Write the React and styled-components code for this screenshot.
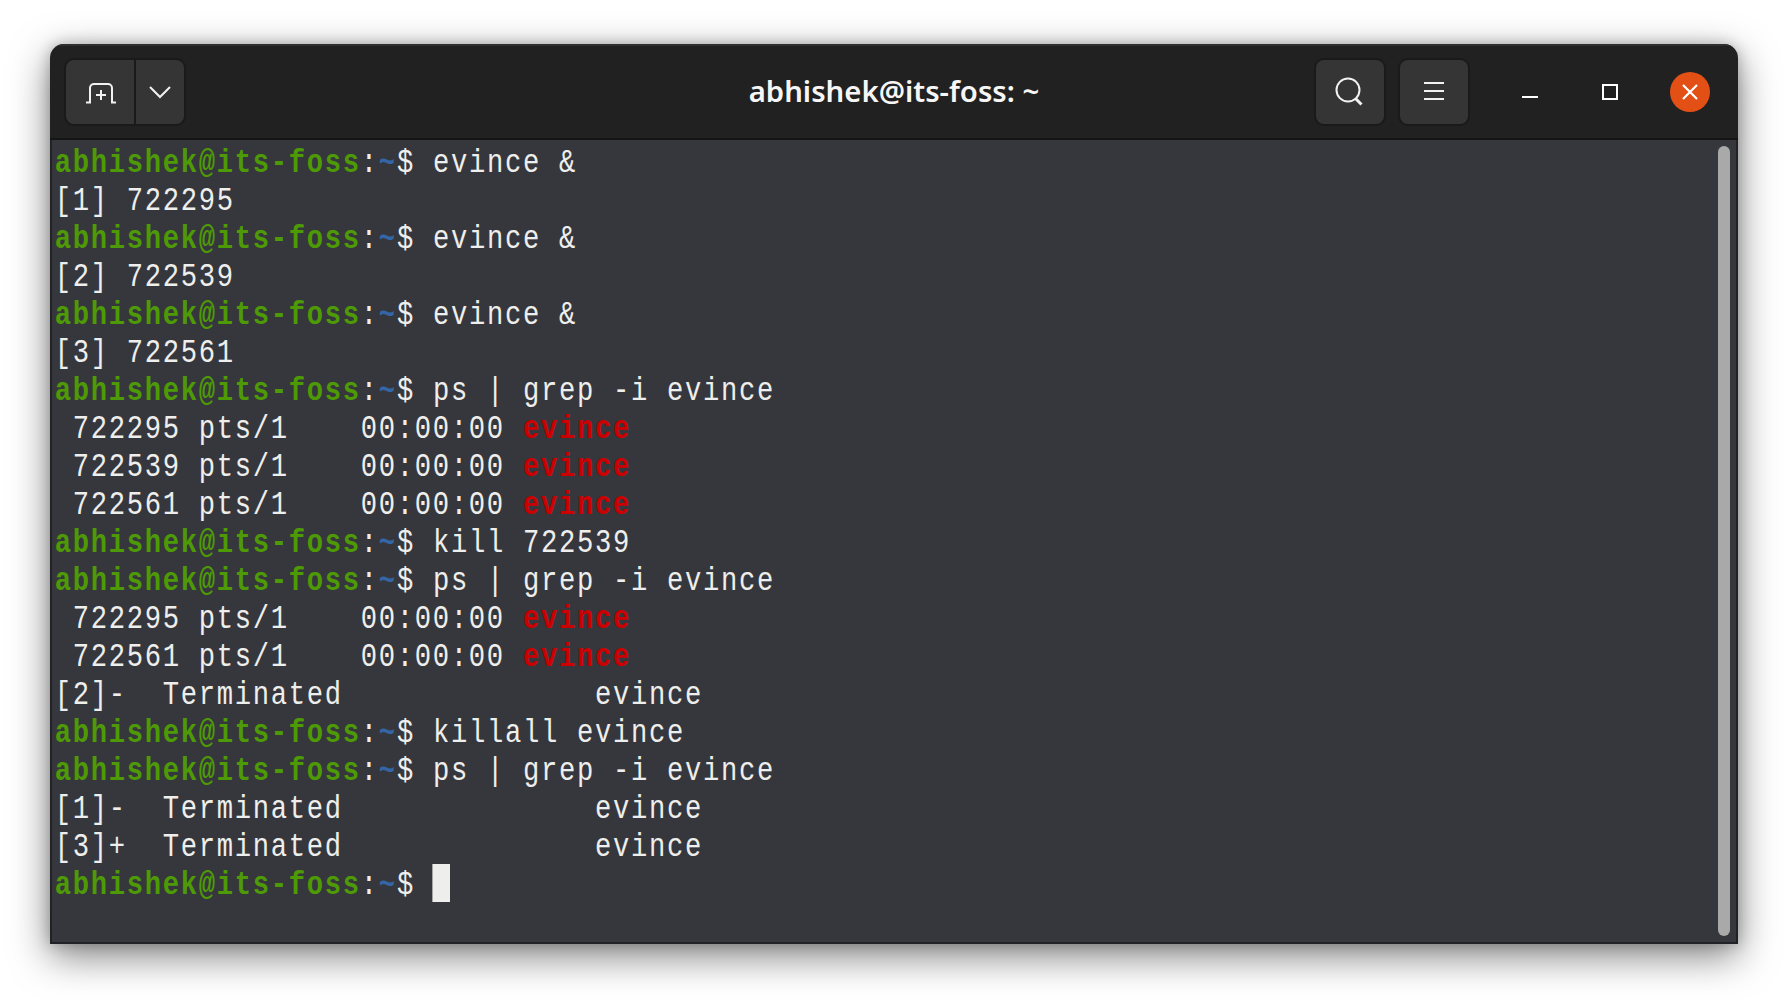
import React from "react";
import styled, { createGlobalStyle } from "styled-components";

const GlobalStyle = createGlobalStyle`
  html, body {
    margin: 0;
    padding: 0;
    background: #ffffff;
  }
`;

const Page = styled.div`
  box-sizing: border-box;
  width: 1788px;
  height: 1000px;
  padding: 44px 50px 56px;
  overflow: hidden;
  background: #ffffff;
`;

const Window = styled.div`
  display: flex;
  flex-direction: column;
  height: 900px;
  border-radius: 14px 14px 0 0;
  box-shadow: 0 12px 38px rgba(0, 0, 0, 0.5), 0 0 14px rgba(0, 0, 0, 0.22);
  overflow: hidden;
`;

const Header = styled.header`
  box-sizing: border-box;
  display: grid;
  grid-template-columns: 1fr auto 1fr;
  align-items: center;
  height: 96px;
  padding: 0 8px;
  background: #212121;
  border-top: 2px solid #2f2f2f;
  border-bottom: 2px solid #151515;
`;

const Left = styled.div`
  display: flex;
  padding-left: 8px;
`;

const Right = styled.div`
  display: flex;
  justify-content: flex-end;
  align-items: center;
  gap: 16px;
`;

const Title = styled.h1`
  margin: 0 0 2px;
  color: #f6f6f6;
  font-family: "Noto Sans", sans-serif;
  font-size: 29.3px;
  font-weight: 600;
`;

const SplitButton = styled.div`
  display: flex;
  height: 64px;
  border-radius: 8px;
  background: #353535;
  box-shadow: 0 0 0 2px #1a1a1a;
  overflow: hidden;
`;

const SplitPart = styled.div`
  display: flex;
  align-items: center;
  justify-content: center;
  width: ${(p) => p.$width}px;
  border-left: ${(p) => (p.$divided ? "2px solid #1a1a1a" : "none")};
`;

const IconButton = styled.div`
  display: flex;
  align-items: center;
  justify-content: center;
  width: 68px;
  height: 64px;
  border-radius: 8px;
  background: #353535;
  box-shadow: 0 0 0 2px #1a1a1a;
`;

const Controls = styled.div`
  display: flex;
  margin-left: 6px;
`;

const Control = styled.div`
  display: flex;
  align-items: center;
  justify-content: center;
  width: 80px;
  height: 64px;
`;

const CloseCircle = styled.div`
  display: flex;
  align-items: center;
  justify-content: center;
  width: 40px;
  height: 40px;
  border-radius: 50%;
  background: #e25016;
`;

const Body = styled.main`
  position: relative;
  flex: 1;
  padding: 2px 0 0 2px;
  background: #36373d;
  border: solid #222226;
  border-width: 0 2px 2px;
`;

const Scrollbar = styled.div`
  position: absolute;
  top: 6px;
  right: 6px;
  bottom: 6px;
  width: 12px;
  border-radius: 6px;
  background: #a9a9a9;
`;

// no Ubuntu Mono here: narrow Liberation Mono down to an 18px cell
const Output = styled.pre`
  margin: 0;
  color: #eeeeec;
  font-family: "Liberation Mono", monospace;
  font-size: 34px;
  letter-spacing: 2.1px;
  line-height: 38px;
  transform: scaleX(0.8);
  transform-origin: left top;
`;

const Line = styled.div`
  box-sizing: border-box;
  height: 38px;
  padding: 2px 0 0 1px;
  white-space: pre;
`;

const User = styled.span`
  color: #4e9a06;
  font-weight: bold;
`;

const Path = styled.span`
  color: #3465a4;
  font-weight: bold;
`;

const Match = styled.span`
  color: #cc0000;
  font-weight: bold;
`;

const Cursor = styled.span`
  display: inline-block;
  vertical-align: top;
  width: 22.5px;
  height: 38px;
  margin: -2px 0 0 -1px;
  background: #eeeeec;
`;

const Prompt = () => (
  <>
    <User>abhishek@its-foss</User>:<Path>~</Path>$
  </>
);

const Command = ({ children }) => (
  <Line>
    <Prompt /> {children}
  </Line>
);

const Proc = ({ pid }) => (
  <Line>
    {` ${pid} pts/1    00:00:00 `}
    <Match>evince</Match>
  </Line>
);

function NewTabIcon() {
  return (
    <svg width="32" height="24" viewBox="-1 0 32 24" fill="none" stroke="#f2f2f2" strokeWidth="2">
      <path d="M1 22.5h4V8a4 4 0 0 1 4-4h14a4 4 0 0 1 4 4v14.5h4" />
      <path d="M11 15h10M16 10v10" />
    </svg>
  );
}

function ChevronIcon() {
  return (
    <svg width="22" height="14" viewBox="0 0 22 14" fill="none" stroke="#f2f2f2" strokeWidth="2">
      <path d="M1 2l10 10L21 2" />
    </svg>
  );
}

function SearchIcon() {
  return (
    <svg width="30" height="30" viewBox="0 0 30 30" fill="none" stroke="#f2f2f2" strokeWidth="2">
      <circle cx="13" cy="13" r="11.5" />
      <path d="M20.5 21.5l6 6" strokeWidth="3" />
    </svg>
  );
}

function MenuIcon() {
  return (
    <svg width="20" height="20" viewBox="0 0 20 20" fill="none" stroke="#f2f2f2" strokeWidth="2">
      <path d="M0 1h20M0 9h20M0 17h20" />
    </svg>
  );
}

function MinimizeIcon() {
  return (
    <svg width="16" height="16" viewBox="0 0 16 16" fill="none" stroke="#ffffff" strokeWidth="2">
      <path d="M0 13h16" />
    </svg>
  );
}

function MaximizeIcon() {
  return (
    <svg width="16" height="16" viewBox="0 0 16 16" fill="none" stroke="#ffffff" strokeWidth="2">
      <rect x="1" y="1" width="14" height="14" />
    </svg>
  );
}

function CloseIcon() {
  return (
    <svg width="16" height="16" viewBox="0 0 16 16" fill="none" stroke="#ffffff" strokeWidth="2.2">
      <path d="M1 1l14 14M15 1L1 15" />
    </svg>
  );
}

export default function App() {
  return (
    <Page>
      <GlobalStyle />
      <Window>
        <Header>
          <Left>
            <SplitButton>
              <SplitPart $width={68}>
                <NewTabIcon />
              </SplitPart>
              <SplitPart $width={48} $divided>
                <ChevronIcon />
              </SplitPart>
            </SplitButton>
          </Left>
          <Title>abhishek@its-foss: ~</Title>
          <Right>
            <IconButton>
              <SearchIcon />
            </IconButton>
            <IconButton>
              <MenuIcon />
            </IconButton>
            <Controls>
              <Control>
                <MinimizeIcon />
              </Control>
              <Control>
                <MaximizeIcon />
              </Control>
              <Control>
                <CloseCircle>
                  <CloseIcon />
                </CloseCircle>
              </Control>
            </Controls>
          </Right>
        </Header>
        <Body>
          <Output>
            <Command>evince &amp;</Command>
            <Line>[1] 722295</Line>
            <Command>evince &amp;</Command>
            <Line>[2] 722539</Line>
            <Command>evince &amp;</Command>
            <Line>[3] 722561</Line>
            <Command>ps | grep -i evince</Command>
            <Proc pid="722295" />
            <Proc pid="722539" />
            <Proc pid="722561" />
            <Command>kill 722539</Command>
            <Command>ps | grep -i evince</Command>
            <Proc pid="722295" />
            <Proc pid="722561" />
            <Line>{"[2]-  Terminated              evince"}</Line>
            <Command>killall evince</Command>
            <Command>ps | grep -i evince</Command>
            <Line>{"[1]-  Terminated              evince"}</Line>
            <Line>{"[3]+  Terminated              evince"}</Line>
            <Line>
              <Prompt /> <Cursor />
            </Line>
          </Output>
          <Scrollbar />
        </Body>
      </Window>
    </Page>
  );
}
